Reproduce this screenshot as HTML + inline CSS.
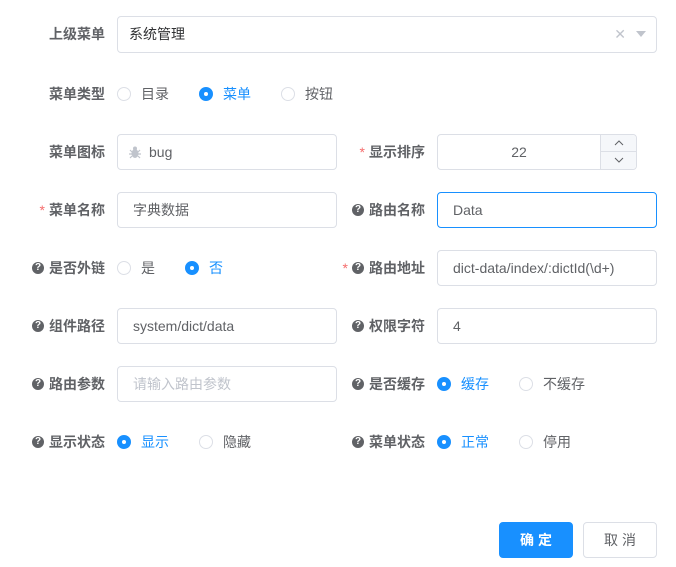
<!DOCTYPE html>
<html><head><meta charset="utf-8"><style>
*{box-sizing:border-box;margin:0;padding:0}
body{width:676px;height:567px;background:#fff;font-family:"Liberation Sans","Noto Sans CJK SC",sans-serif;font-size:14px;color:#606266;position:relative;overflow:hidden}
.l{position:absolute;font-weight:bold;color:#606266;text-align:right;line-height:20px;white-space:nowrap}
.req{color:#f56c6c;margin-right:4px;font-weight:normal}
.q{display:inline-block;width:12px;height:12px;border-radius:50%;background:#606266;color:#fff;font-size:10px;line-height:12px;text-align:center;margin-right:5px;vertical-align:top;margin-top:4px;font-weight:bold;font-family:"Liberation Sans",sans-serif}
.in{position:absolute;border:1px solid #dcdfe6;border-radius:4px;height:36px;line-height:34px;padding-left:15px;color:#606266;background:#fff}
.r{position:absolute;line-height:20px;white-space:nowrap}
.c{display:inline-block;width:14px;height:14px;border:1px solid #dcdfe6;border-radius:50%;vertical-align:-2px;margin-right:10px;background:#fff}
.c.on{border-color:#1890ff;background:#1890ff;position:relative}
.c.on:after{content:"";position:absolute;left:4px;top:4px;width:4px;height:4px;border-radius:50%;background:#fff}
.blue{color:#1890ff}
.btn{position:absolute;height:36px;border-radius:4px;line-height:34px;text-align:center;font-size:14px;letter-spacing:4px;padding-left:4px}
</style></head><body>
<div class="l" style="right:571px;top:24px">上级菜单</div>
<div class="in" style="left:117px;top:16px;width:540px;height:37px;padding-left:11px;color:#303133">系统管理<span style="position:absolute;right:30px;top:0;color:#c0c4cc;font-size:14px">✕</span><span style="position:absolute;right:10px;top:14px;width:0;height:0;border-left:5px solid transparent;border-right:5px solid transparent;border-top:6px solid #c0c4cc"></span></div>

<div class="l" style="right:571px;top:84px">菜单类型</div>
<div class="r" style="left:117px;top:84px"><span class="c"></span>目录</div>
<div class="r blue" style="left:199px;top:84px"><span class="c on"></span>菜单</div>
<div class="r" style="left:281px;top:84px"><span class="c"></span>按钮</div>

<div class="l" style="right:571px;top:142px">菜单图标</div>
<div class="in" style="left:117px;top:134px;width:220px;padding-left:10px"><svg width="14" height="14" viewBox="0 0 14 14" style="vertical-align:-2px;margin-right:7px"><ellipse cx="7" cy="8.5" rx="3.5" ry="4.5" fill="#c0c4cc"/><circle cx="7" cy="3.5" r="2" fill="#c0c4cc"/><path d="M2 5l2 2M12 5l-2 2M1 9h3M13 9h-3M2 13l2-2M12 13l-2-2" stroke="#c0c4cc" stroke-width="1.2"/></svg>bug</div>
<div class="l" style="right:251px;top:142px"><span class="req">*</span>显示排序</div>
<div class="in" style="left:437px;top:134px;width:200px;padding:0;text-align:center;background:#fff"><span style="position:absolute;left:0;right:36px;text-align:center">22</span><div style="position:absolute;right:0;top:0;width:36px;height:34px;background:#f5f7fa;border-left:1px solid #dcdfe6;border-radius:0 4px 4px 0;overflow:hidden"><div style="height:17px;border-bottom:1px solid #dcdfe6;line-height:0"><svg width="35" height="16" viewBox="0 0 35 16"><path d="M14 10l4-4 4 4" fill="none" stroke="#606266" stroke-width="1"/></svg></div><div style="line-height:0"><svg width="35" height="16" viewBox="0 0 35 16"><path d="M14 6l4 4 4-4" fill="none" stroke="#606266" stroke-width="1"/></svg></div></div></div>

<div class="l" style="right:571px;top:200px"><span class="req">*</span>菜单名称</div>
<div class="in" style="left:117px;top:192px;width:220px">字典数据</div>
<div class="l" style="right:251px;top:200px"><span class="q">?</span>路由名称</div>
<div class="in" style="left:437px;top:192px;width:220px;border-color:#1890ff">Data</div>

<div class="l" style="right:571px;top:258px"><span class="q">?</span>是否外链</div>
<div class="r" style="left:117px;top:258px"><span class="c"></span>是</div>
<div class="r blue" style="left:185px;top:258px"><span class="c on"></span>否</div>
<div class="l" style="right:251px;top:258px"><span class="req">*</span><span class="q">?</span>路由地址</div>
<div class="in" style="left:437px;top:250px;width:220px">dict-data/index/:dictId(\d+)</div>

<div class="l" style="right:571px;top:316px"><span class="q">?</span>组件路径</div>
<div class="in" style="left:117px;top:308px;width:220px">system/dict/data</div>
<div class="l" style="right:251px;top:316px"><span class="q">?</span>权限字符</div>
<div class="in" style="left:437px;top:308px;width:220px">4</div>

<div class="l" style="right:571px;top:374px"><span class="q">?</span>路由参数</div>
<div class="in" style="left:117px;top:366px;width:220px;color:#c0c4cc">请输入路由参数</div>
<div class="l" style="right:251px;top:374px"><span class="q">?</span>是否缓存</div>
<div class="r blue" style="left:437px;top:374px"><span class="c on"></span>缓存</div>
<div class="r" style="left:519px;top:374px"><span class="c"></span>不缓存</div>

<div class="l" style="right:571px;top:432px"><span class="q">?</span>显示状态</div>
<div class="r blue" style="left:117px;top:432px"><span class="c on"></span>显示</div>
<div class="r" style="left:199px;top:432px"><span class="c"></span>隐藏</div>
<div class="l" style="right:251px;top:432px"><span class="q">?</span>菜单状态</div>
<div class="r blue" style="left:437px;top:432px"><span class="c on"></span>正常</div>
<div class="r" style="left:519px;top:432px"><span class="c"></span>停用</div>

<div class="btn" style="left:499px;top:522px;width:74px;background:#1890ff;border:1px solid #1890ff;color:#fff;font-weight:bold">确定</div>
<div class="btn" style="left:583px;top:522px;width:74px;background:#fff;border:1px solid #dcdfe6;color:#606266">取消</div>
</body></html>
